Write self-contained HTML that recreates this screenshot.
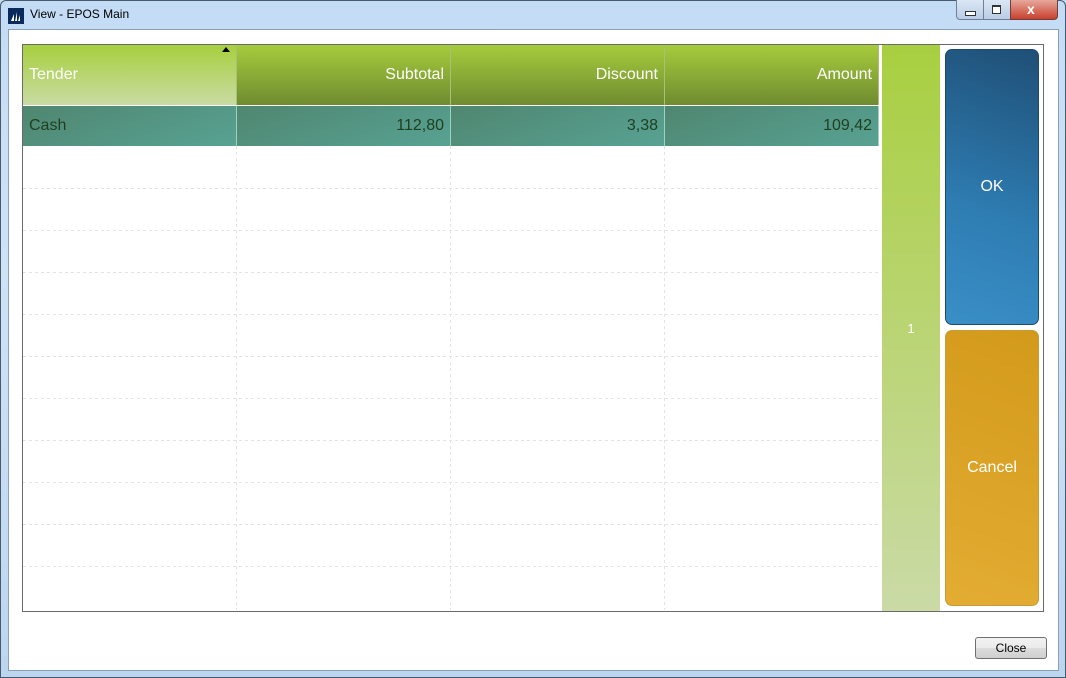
<!DOCTYPE html>
<html><head><style>
body{margin:0;width:1066px;height:678px;overflow:hidden;font-family:"Liberation Sans",sans-serif;background:#c4dcf3;position:relative}
.abs{position:absolute}
.win{left:0;top:0;width:1064px;height:676px;border:1px solid #4a5a6c;border-radius:6px 6px 0 0;background:linear-gradient(#c3dcf5,#cfe3f7 40%,#bcd6f0)}
.client{left:8px;top:29px;width:1049px;height:640px;background:#fff;border:1px solid #8aa0b8}
.hdr{top:45px;height:60px;color:#fff;font-size:16px;line-height:60px;padding:0 6px;box-sizing:border-box;background:linear-gradient(#a6cc3c,#6f8b30);border-right:1px solid #a9bf7a}
.cell{top:106px;height:40px;font-size:16px;line-height:40px;padding:0 6px;box-sizing:border-box;color:#1f3f1f;background:linear-gradient(160deg,#4f8670,#58a293);border-right:1px solid #9fd0c0}
.btn{color:#fff;font-size:16px;display:flex;align-items:center;justify-content:center;border-radius:7px}
</style></head><body>
<div class="abs win"></div>
<svg class="abs" style="left:8px;top:8px" width="16" height="16"><rect width="16" height="16" fill="#0b2a5c"/><path d="M3 13L6 6V13ZM7 13L9 4V13ZM10 13L12 7V13Z" fill="#fff"/></svg>
<div class="abs" style="left:30px;top:7px;font-size:12px;color:#000">View - EPOS Main</div>
<div class="abs" style="left:956px;top:0;width:26px;height:19px;border:1px solid #6d7f94;border-top:none;border-radius:0 0 0 4px;background:linear-gradient(#dbe7f5,#b9cde5)"></div>
<div class="abs" style="left:965px;top:11px;width:9px;height:3px;border:1px solid #333;background:#fff"></div>
<div class="abs" style="left:983px;top:0;width:26px;height:19px;border:1px solid #6d7f94;border-top:none;background:linear-gradient(#dbe7f5,#b9cde5)"></div>
<div class="abs" style="left:992px;top:5px;width:7px;height:6px;border:1px solid #333;border-top-width:2px;background:#fff"></div>
<div class="abs" style="left:1010px;top:0;width:46px;height:19px;border:1px solid #6d4040;border-top:none;border-radius:0 0 4px 0;background:linear-gradient(#e7a89c,#c8402c)"></div>
<div class="abs" style="left:1027px;top:1px;color:#fff;font-size:14px;font-weight:bold">x</div>
<div class="abs client"></div>
<div class="abs" style="left:22px;top:44px;width:1020px;height:566px;border:1px solid #6a6a6a;background:#fff"></div>
<svg class="abs" style="left:23px;top:146px" width="856" height="464">
<g stroke="#e3e3e3" stroke-dasharray="3,3">
<line x1="0" x2="856" y1="42.5" y2="42.5"/><line x1="0" x2="856" y1="84.5" y2="84.5"/><line x1="0" x2="856" y1="126.5" y2="126.5"/><line x1="0" x2="856" y1="168.5" y2="168.5"/><line x1="0" x2="856" y1="210.5" y2="210.5"/><line x1="0" x2="856" y1="252.5" y2="252.5"/><line x1="0" x2="856" y1="294.5" y2="294.5"/><line x1="0" x2="856" y1="336.5" y2="336.5"/><line x1="0" x2="856" y1="378.5" y2="378.5"/><line x1="0" x2="856" y1="420.5" y2="420.5"/>
<line x1="213.5" x2="213.5" y1="0" y2="464"/><line x1="427.5" x2="427.5" y1="0" y2="464"/><line x1="641.5" x2="641.5" y1="0" y2="464"/>
</g></svg>
<div class="abs hdr" style="left:23px;width:214px;background:linear-gradient(#a7cf3f,#c9dba3)">Tender</div>
<div class="abs" style="left:222px;top:47px;width:0;height:0;border:4px solid transparent;border-bottom:5px solid #000;border-top:none"></div>
<div class="abs hdr" style="left:237px;width:214px;text-align:right">Subtotal</div>
<div class="abs hdr" style="left:451px;width:214px;text-align:right">Discount</div>
<div class="abs hdr" style="left:665px;width:214px;text-align:right">Amount</div>
<div class="abs cell" style="left:23px;width:214px">Cash</div>
<div class="abs cell" style="left:237px;width:214px;text-align:right">112,80</div>
<div class="abs cell" style="left:451px;width:214px;text-align:right">3,38</div>
<div class="abs cell" style="left:665px;width:214px;text-align:right">109,42</div>
<div class="abs" style="left:882px;top:45px;width:58px;height:566px;background:linear-gradient(#a8cf40,#cbdaa6);color:#fff;font-size:13px;display:flex;align-items:center;justify-content:center">1</div>
<div class="abs btn" style="left:945px;top:49px;width:94px;height:276px;background:linear-gradient(200deg,#1f4f76,#2e7db3 60%,#3a8fc7);border:1px solid #1c4a6e;box-sizing:border-box">OK</div>
<div class="abs btn" style="left:945px;top:330px;width:94px;height:276px;background:linear-gradient(200deg,#d39a1a,#e3ac33);border:1px solid #c99a3a;box-sizing:border-box">Cancel</div>
<div class="abs" style="left:975px;top:637px;width:72px;height:22px;border:1px solid #707070;border-radius:3px;box-sizing:border-box;background:linear-gradient(#f2f2f2,#ebebeb 50%,#dddddd 50%,#cfcfcf);font-size:12px;text-align:center;line-height:20px">Close</div>
</body></html>
